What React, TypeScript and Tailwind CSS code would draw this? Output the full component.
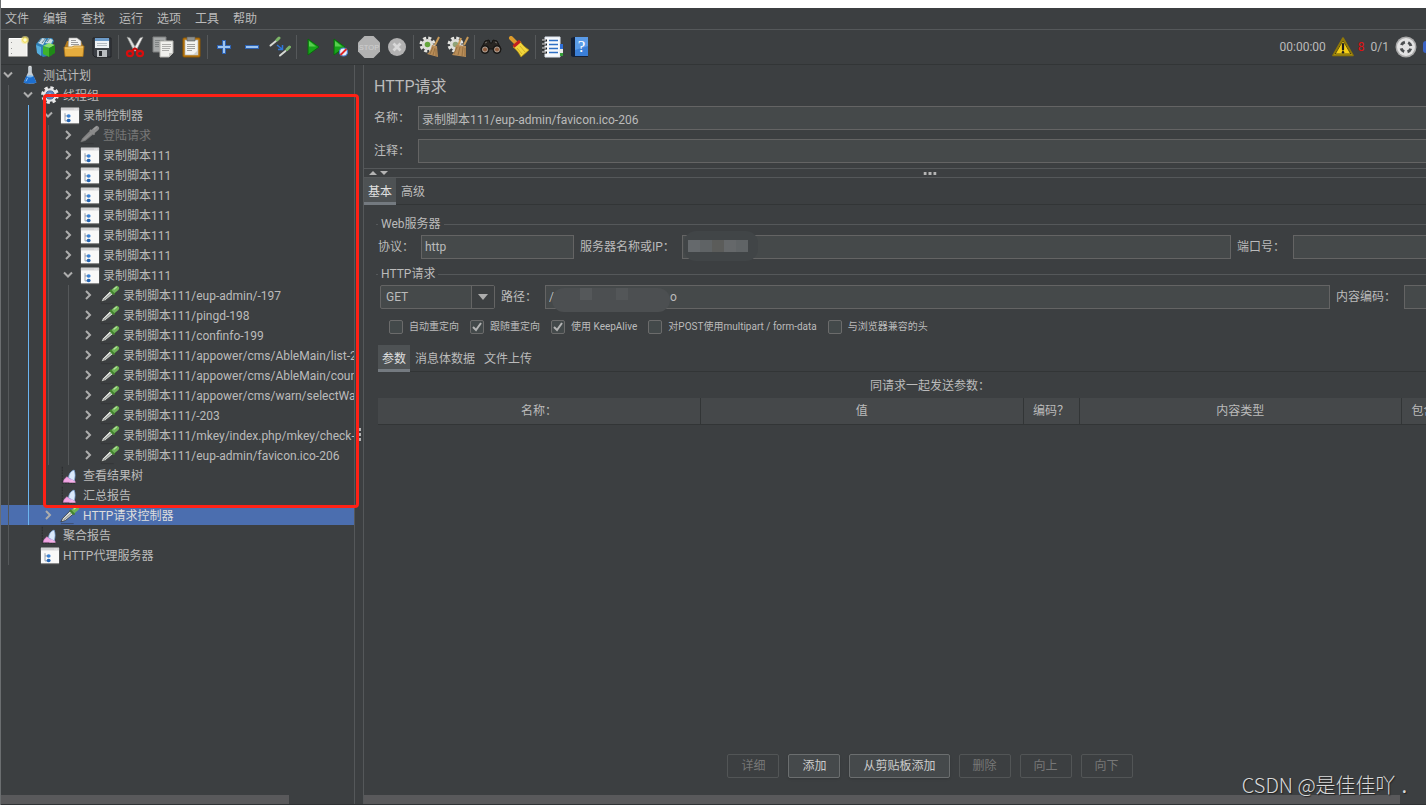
import React from "react";

const Svg: React.FC<{ size?: number; children: React.ReactNode }> = ({ size = 22, children }) => (
  <svg width={size} height={size} viewBox="0 0 22 22" fill="none" className="shrink-0" aria-hidden="true">
    {children}
  </svg>
);

/* ---------- toolbar icons ---------- */

const NewIcon = () => (
  <Svg>
    <path d="M2 2.500h18v18H2z" fill="#efefec" stroke="#fff" />
    <path d="M2 20.500h18" stroke="#9a9a96" />
    <path d="M4 6.500h1M4 12.500h1M4 17.500h1" stroke="#999" />
    <circle cx="18" cy="4" r="4" fill="#f6e98a" opacity=".6" />
    <circle cx="18" cy="4" r="2.300" fill="#fffbd0" stroke="#f0dc4c" />
  </Svg>
);

const TemplatesIcon = () => (
  <Svg>
    <path d="M1 8l5-6h11l2 3-2 4v10l-9 2-5-4z" fill="#2e7fb4" />
    <path d="M3 7l4-5 4 1-3 6zM10 7l4-5 4 2-2 4z" fill="#c9dbe4" />
    <path d="M4 6l3-4M7 7l4-5M12 6l3-4" stroke="#5c7f92" />
    <path d="M1 9l5 2v9l-4-3z" fill="#56aede" />
    <path d="M8 10l6-3 6 2-5 3z" fill="#8be06a" />
    <path d="M8 10l6 2v9l-6-3z" fill="#3fb42c" />
    <path d="M14 12l6-3v8l-6 4z" fill="#1f8a17" />
  </Svg>
);

const OpenIcon = () => (
  <Svg>
    <path d="M2 10l2-5h14l2 5v10H2z" fill="#b37a1c" />
    <path d="M6 2h8l4 3v8H5z" fill="#f3f3f1" stroke="#aaa" strokeWidth=".6" />
    <path d="M8 4.500h5M8 6.500h7M8 8.500h8" stroke="#9b9b9b" />
    <path d="M1 11h8l2-1h10l-1 10.500H2z" fill="#e6ad3e" stroke="#a8741b" strokeWidth=".8" />
    <path d="M2 12h7l2-1h9" stroke="#f8d483" />
  </Svg>
);

const SaveIcon = () => (
  <Svg>
    <path d="M2 2h18v19H4l-2-2z" fill="#3b3f45" stroke="#202226" />
    <path d="M4 2h14v10H4z" fill="#eef2f5" />
    <path d="M4 2h14v3H4z" fill="#6d9bc8" />
    <path d="M6 7.500h10M6 9.500h10" stroke="#b5bcc2" />
    <path d="M6 14h10v7H6z" fill="#b9bdc0" />
    <path d="M8 15h3v5H8z" fill="#292c30" />
  </Svg>
);

const CutIcon = () => (
  <Svg>
    <path d="M3 1l3 1 7 12-3 1z" fill="#dcdedc" stroke="#8b8d8b" strokeWidth=".6" />
    <path d="M19 1l-3 1-7 12 3 1z" fill="#f4f4f2" stroke="#8b8d8b" strokeWidth=".6" />
    <path d="M11 12l-3 3M11 12l3 3" stroke="#c80808" strokeWidth="2" />
    <ellipse cx="6" cy="17.500" rx="3" ry="2.600" stroke="#d90d0d" strokeWidth="2.200" />
    <ellipse cx="16" cy="17.500" rx="3" ry="2.600" stroke="#d90d0d" strokeWidth="2.200" />
  </Svg>
);

const CopyIcon = () => (
  <Svg>
    <path d="M1 1h13v15H1z" fill="#a5a8a8" stroke="#7c7f7f" />
    <path d="M3 4.500h9M3 6.500h4M3 8.500h4M3 10.500h4" stroke="#7f8383" />
    <path d="M8 5h13v12l-4 4H8z" fill="#f0f0ed" stroke="#b4b4b0" />
    <path d="M10 8.500h9M10 10.500h9M10 12.500h8M10 14.500h7" stroke="#adadab" />
    <path d="M17 21v-4h4z" fill="#c6c6c2" />
  </Svg>
);

const PasteIcon = () => (
  <Svg>
    <rect x="3" y="2" width="17" height="19" rx="1" fill="#c17d11" stroke="#8f5902" />
    <path d="M5 4h13v15H5z" fill="#f3f3f1" stroke="#a9a9a5" strokeWidth=".6" />
    <path d="M7 1h8v4H7z" fill="#8e918f" stroke="#5d605e" strokeWidth=".6" />
    <path d="M7 8.500h8M7 10.500h8M7 12.500h8M7 14.500h5" stroke="#a0a09e" />
    <path d="M13 19l5-5v5z" fill="#cfcfcb" />
  </Svg>
);

const PlusIcon = () => (
  <Svg>
    <path d="M11 4v14M4 11h14" stroke="#2d62b3" strokeWidth="4" />
    <path d="M11 5v12M5 11h12" stroke="#9cc4f0" strokeWidth="2" />
  </Svg>
);

const MinusIcon = () => (
  <Svg>
    <path d="M4 11h14" stroke="#2d62b3" strokeWidth="4" />
    <path d="M5 11h12" stroke="#9cc4f0" strokeWidth="2" />
  </Svg>
);

const ToggleIcon = () => (
  <Svg>
    <path d="M1.500 9.500L7 5" stroke="#d6d8d4" strokeWidth="2" strokeLinecap="round" />
    <path d="M8 4l2-2" stroke="#7cb568" strokeWidth="3" strokeLinecap="round" />
    <path d="M11 19.500l5.500-4.500" stroke="#d6d8d4" strokeWidth="2" strokeLinecap="round" />
    <path d="M18 13.500l2.500-2.500" stroke="#7cb568" strokeWidth="3" strokeLinecap="round" />
    <path d="M8 9l5 4M13.500 9v4.500H9" stroke="#2f74d8" strokeWidth="1.500" />
  </Svg>
);

const PlayIcon = () => (
  <Svg>
    <path d="M6 3l11 8-11 8z" fill="#18a51b" stroke="#0a6a0d" />
    <path d="M7 5l7 5.500H7z" fill="#58cf4f" />
  </Svg>
);

const PlayNoPauseIcon = () => (
  <Svg>
    <path d="M4 3l11 8-11 8z" fill="#18a51b" stroke="#0a6a0d" />
    <path d="M5 5l7 5.500H5z" fill="#58cf4f" />
    <circle cx="13.500" cy="16" r="4" fill="#e9eef8" stroke="#4c7fd0" strokeWidth="1.200" />
    <path d="M10.500 19l6-6" stroke="#e02424" strokeWidth="1.800" />
  </Svg>
);

const StopIcon = () => (
  <Svg>
    <path d="M6.500 0h9L22 6.500v9L15.500 22h-9L0 15.500v-9z" fill="#b2b2b2" />
    <text x="11" y="14" textAnchor="middle" fontSize="7.500" fontFamily="Liberation Sans, sans-serif" fill="#cfcfcf">
      STOP
    </text>
  </Svg>
);

const ShutdownIcon = () => (
  <Svg>
    <circle cx="11" cy="11" r="9" fill="#b2b2b2" />
    <path d="M7.500 7.500l7 7M14.500 7.500l-7 7" stroke="#d8d8d8" strokeWidth="2.800" />
  </Svg>
);

const Gear: React.FC<{ hub: string }> = ({ hub }) => (
  <>
    <circle cx="8.500" cy="8.500" r="6.500" stroke="#e4e4e0" strokeWidth="3" strokeDasharray="3 2.100" />
    <circle cx="8.500" cy="8.500" r="5.500" fill="#dededa" />
    <circle cx="8.500" cy="8.500" r="2.800" fill={hub} />
  </>
);

const ClearIcon = () => (
  <Svg>
    <Gear hub="#64a63c" />
    <path d="M20 1l-4 8" stroke="#c99a58" strokeWidth="2" />
    <path d="M13 9l5 1 1 11-11-3c3-2 4-5 5-9z" fill="#b98d58" />
    <path d="M14 11l-3 7M16 12l-2 7M17 13l0 7" stroke="#8e6a3c" strokeWidth=".8" />
  </Svg>
);

const ClearAllIcon = () => (
  <Svg>
    <Gear hub="#8fa378" />
    <path d="M14 2l-3 8M21 1l-4 8" stroke="#c99a58" strokeWidth="2" />
    <path d="M9 9l10 1 0 11-14-2c3-3 3-6 4-10z" fill="#b98d58" />
    <path d="M10 11l-3 7M13 11l-2 8M16 11l-1 9M18 12l0 8" stroke="#8e6a3c" strokeWidth=".8" />
  </Svg>
);

const SearchIcon = () => (
  <Svg>
    <path d="M5 5l4-1 1 3h2l1-3 4 1 4 8H1z" fill="#292623" stroke="#161412" />
    <path d="M5 7l2-1M15 6l2 1" stroke="#77716a" />
    <circle cx="5" cy="13.500" r="4" fill="#2a2725" stroke="#171513" />
    <circle cx="17" cy="13.500" r="4" fill="#2a2725" stroke="#171513" />
    <circle cx="5" cy="13.500" r="2.500" fill="#8b5a3c" stroke="#c0b4a8" strokeWidth=".8" />
    <circle cx="17" cy="13.500" r="2.500" fill="#8b5a3c" stroke="#c0b4a8" strokeWidth=".8" />
  </Svg>
);

const ResetSearchIcon = () => (
  <Svg>
    <path d="M3 2l5 5" stroke="#dc9b2c" strokeWidth="4" strokeLinecap="round" />
    <path d="M5 11l7-6c2 4 5 6 9 9l-8 7c-2-4-4-7-8-10z" fill="#f1d63c" stroke="#b08c12" strokeWidth=".8" />
    <path d="M5.500 10.500L12 5" stroke="#c32020" strokeWidth="3" />
    <path d="M9 12l5 6M12 10l5 6" stroke="#d3b022" />
  </Svg>
);

const FunctionIcon = () => (
  <Svg>
    <path d="M4 1h15v20H4z" fill="#f7f9fc" stroke="#dfe6f0" />
    <path d="M19 8h3v5h-3z" fill="#2f6fd6" />
    <path d="M19 13h3v4h-3z" fill="#e8e8e8" />
    <path d="M19 17h3v3h-3z" fill="#36a03a" />
    <path d="M1 4.500h5M1 8.500h5M1 12.500h5M1 16.500h5" stroke="#1c1c1c" strokeWidth="2" />
    <path d="M1 4h4M1 8h4M1 12h4M1 16h4" stroke="#eee" />
    <path d="M8 4.500h9M8 8.500h9M8 12.500h9M8 16.500h9" stroke="#2e6fc4" strokeWidth="1.500" />
  </Svg>
);

const HelpIcon = () => (
  <Svg>
    <path d="M2 2l3-1h14v20H4l-2-1z" fill="#142036" />
    <path d="M6 1h13v19H6z" fill="#3a7fd8" />
    <path d="M6 1h13v9L6 14z" fill="#5a9be8" />
    <text x="12.500" y="16" textAnchor="middle" fontSize="17" fontFamily="Liberation Serif, serif" fill="#fff">
      ?
    </text>
  </Svg>
);

const WarningIcon = () => (
  <Svg>
    <path d="M11 2L1 19.500h20z" fill="#f5cf17" stroke="#8f7708" strokeWidth="1.600" strokeLinejoin="round" />
    <path d="M11 4.500L3.200 18h15.600z" stroke="#35300b" strokeWidth=".8" />
    <path d="M11 8v5.500" stroke="#1d1d1d" strokeWidth="2.200" strokeLinecap="round" />
    <circle cx="11" cy="16.300" r="1.200" fill="#1d1d1d" />
  </Svg>
);

const ServerStateIcon = () => (
  <Svg>
    <circle cx="11" cy="11" r="10.500" fill="#a9a9a9" />
    <circle cx="11" cy="11" r="9" fill="#e2e2e2" />
    <circle cx="11" cy="11" r="5" stroke="#4b4e50" strokeWidth="3" strokeDasharray="4.400 3.450" strokeDashoffset="-1.700" />
  </Svg>
);

/* ---------- tree icons ---------- */

const PlanIcon = () => (
  <Svg size={20}>
    <path d="M9 2h4v6l5 11c0 2-14 2-14 0L9 8z" fill="#dfe8ee" opacity=".85" />
    <path d="M7 12h8l3 7c0 2-14 2-14 0z" fill="#1d6fd0" />
    <ellipse cx="11" cy="12.500" rx="3.500" ry="1.200" fill="#7db9ee" />
    <path d="M9.500 1.500h3" stroke="#fff" />
    <path d="M6.500 18l2-4" stroke="#9fd0fa" />
  </Svg>
);

const ThreadIcon = () => (
  <Svg size={20}>
    <circle cx="11" cy="11" r="8" stroke="#e8e8e8" strokeWidth="3.500" strokeDasharray="3.500 2.800" />
    <circle cx="11" cy="11" r="7.500" fill="#e4e5e7" />
    <circle cx="11" cy="11" r="4.500" fill="#5b86c4" stroke="#48658f" />
    <circle cx="11" cy="11" r="1.800" fill="#a9c4e6" />
  </Svg>
);

const ControllerIcon = () => (
  <Svg size={20}>
    <path d="M1 3h20v17H1z" fill="#f9f9f9" />
    <path d="M1 3h20v3H1z" fill="#d2d2d4" />
    <path d="M16 4.500h1M18 4.500h1" stroke="#fff" />
    <path d="M5.500 9v8.500H8M5.500 12H8" stroke="#8c98a8" />
    <ellipse cx="9.500" cy="12" rx="2.200" ry="1.900" fill="#3c82d4" />
    <ellipse cx="9.500" cy="17" rx="2.200" ry="1.900" fill="#2465b4" />
    <path d="M1 20.500h20" stroke="#9a9a9a" />
  </Svg>
);

const SamplerIcon: React.FC<{ disabled?: boolean }> = ({ disabled }) => (
  <Svg size={20}>
    <path d="M1 20.500h14" stroke="#2b2d2e" opacity=".5" />
    <path d="M1 18.500L3 14.500 11 6.500l3.500 3.500L6 17z" fill={disabled ? "#858585" : "#dcdfdb"} stroke={disabled ? "#777" : "#2b2d2c"} strokeWidth=".8" />
    <path d="M4 16.500L12.500 9" stroke={disabled ? "#929292" : "#9a9f9b"} strokeWidth="1.200" />
    <path d="M14 7.500L18.500 3.500" stroke={disabled ? "#8b8b8b" : "#6fb356"} strokeWidth="5" strokeLinecap="round" />
    <path d="M11 5.500l5 5" stroke={disabled ? "#8b8b8b" : "#42802f"} strokeWidth="2" />
    <path d="M15.500 4.500l2.500-2" stroke={disabled ? "#a0a0a0" : "#b4e09c"} strokeWidth="1.500" strokeLinecap="round" />
  </Svg>
);

const ReportIcon = () => (
  <Svg size={20}>
    <path d="M2.500 2v18H17" stroke="#26282a" strokeDasharray="2 1" />
    <path d="M3.500 19l1-3 3-3 3 1.500 2-1.500 3 3 1.500 3z" fill="#f2a6e4" stroke="#d27cc4" strokeWidth=".6" />
    <path d="M9.500 14c0-4 2.500-7.500 6-8.500 1.500 4 1.500 7.500 0 12z" fill="#dbe9fb" stroke="#7ba4d8" strokeWidth=".8" />
    <path d="M10 19.300l3-4 4 4z" fill="#f4b4e8" />
  </Svg>
);

const Chevron: React.FC<{ open?: boolean }> = ({ open }) => (
  <svg width="10" height="10" viewBox="0 0 10 10" fill="none" stroke="#adadad" strokeWidth="2" aria-hidden="true">
    <path d={open ? "M1 2.500l4 4 4-4" : "M3 1l4 4-4 4"} />
  </svg>
);

/* ---------- data ---------- */

const menus = ["文件", "编辑", "查找", "运行", "选项", "工具", "帮助"];

const toolbar: [string, React.FC][][] = [
  [["新建", NewIcon], ["模板", TemplatesIcon], ["打开", OpenIcon], ["保存", SaveIcon]],
  [["剪切", CutIcon], ["复制", CopyIcon], ["粘贴", PasteIcon]],
  [["展开", PlusIcon], ["收起", MinusIcon], ["切换", ToggleIcon]],
  [["启动", PlayIcon], ["不停顿开始", PlayNoPauseIcon], ["停止", StopIcon], ["关闭", ShutdownIcon]],
  [["清除", ClearIcon], ["清除全部", ClearAllIcon]],
  [["搜索", SearchIcon], ["重置搜索", ResetSearchIcon]],
  [["函数助手", FunctionIcon], ["帮助", HelpIcon]],
];

type Node = {
  label: string;
  depth: number;
  icon: React.ReactNode;
  state?: "open" | "closed";
  selected?: boolean;
  disabled?: boolean;
};

const requests = [
  "/eup-admin/-197",
  "/pingd-198",
  "/confinfo-199",
  "/appower/cms/AbleMain/list-200",
  "/appower/cms/AbleMain/count-201",
  "/appower/cms/warn/selectWarn-202",
  "/-203",
  "/mkey/index.php/mkey/check-204",
  "/eup-admin/favicon.ico-206",
];

const nodes: Node[] = [
  { label: "测试计划", depth: 0, icon: <PlanIcon />, state: "open" },
  { label: "线程组", depth: 1, icon: <ThreadIcon />, state: "open" },
  { label: "录制控制器", depth: 2, icon: <ControllerIcon />, state: "open" },
  { label: "登陆请求", depth: 3, icon: <SamplerIcon disabled />, state: "closed", disabled: true },
  ...Array.from({ length: 6 }, (): Node => ({
    label: "录制脚本111",
    depth: 3,
    icon: <ControllerIcon />,
    state: "closed",
  })),
  { label: "录制脚本111", depth: 3, icon: <ControllerIcon />, state: "open" },
  ...requests.map((path): Node => ({
    label: `录制脚本111${path}`,
    depth: 4,
    icon: <SamplerIcon />,
    state: "closed",
  })),
  { label: "查看结果树", depth: 2, icon: <ReportIcon /> },
  { label: "汇总报告", depth: 2, icon: <ReportIcon /> },
  { label: "HTTP请求控制器", depth: 2, icon: <SamplerIcon />, state: "closed", selected: true },
  { label: "聚合报告", depth: 1, icon: <ReportIcon /> },
  { label: "HTTP代理服务器", depth: 1, icon: <ControllerIcon /> },
];

const options = [
  { label: "自动重定向", checked: false },
  { label: "跟随重定向", checked: true },
  { label: "使用 KeepAlive", checked: true },
  { label: "对POST使用multipart / form-data", checked: false },
  { label: "与浏览器兼容的头", checked: false },
];

const actions = [
  { label: "详细", enabled: false },
  { label: "添加", enabled: true },
  { label: "从剪贴板添加", enabled: true },
  { label: "删除", enabled: false },
  { label: "向上", enabled: false },
  { label: "向下", enabled: false },
];

const mosaic = ["bg-[#65696c]", "bg-[#5f6365]", "bg-[#5b5c5a]", "bg-[#65686a]", "bg-[#606466]"];

const field = "h-6 min-w-0 border border-[#646464] bg-[#45494a] px-[3px] text-[#bbbbbb] outline-none";

/* ---------- parts ---------- */

const TreeRow: React.FC<{ node: Node }> = ({ node }) => (
  <li
    className={`flex h-5 items-center whitespace-nowrap ${
      node.selected ? "bg-[#4b6eaf] text-[#dddddd]" : node.disabled ? "text-[#777777]" : ""
    }`}
  >
    {Array.from({ length: node.depth }, (_, i) => (
      <span key={i} className="w-5 shrink-0 self-stretch pl-[7px]">
        <span className={`block h-full border-l ${i === 1 ? "border-[#6cb4f0]" : "border-[#55585a]"}`} />
      </span>
    ))}
    <span className="flex w-[19px] shrink-0 pl-[2px]">{node.state && <Chevron open={node.state === "open"} />}</span>
    {node.icon}
    <span className="pl-[3px] pt-[2px]">{node.label}</span>
  </li>
);

const Tabs: React.FC<{ items: string[] }> = ({ items }) => (
  <div role="tablist" className="flex h-[27px] gap-[1px] border-b border-[#323536]">
    {items.map((item, i) => (
      <button
        key={item}
        role="tab"
        aria-selected={i === 0}
        className={
          i === 0
            ? "h-[27px] border-b-[3px] border-[#747a80] bg-[#4e5254] px-1 pt-1 text-[#e0e0e0]"
            : "h-[27px] border-b-[3px] border-transparent px-1 pt-1"
        }
      >
        {item}
      </button>
    ))}
  </div>
);

const GroupTitle: React.FC<{ children: React.ReactNode }> = ({ children }) => (
  <div className="-ml-[2px] flex h-4 items-center gap-[3px]">
    <span className="h-px w-[2px] bg-[#55585a]" />
    <span>{children}</span>
    <span className="h-px flex-1 bg-[#55585a]" />
  </div>
);

const Toolbar = () => (
  <div className="flex h-[35px] shrink-0 items-center border-b border-[#323536] pl-[3px]">
    {toolbar.map((group, i) => (
      <React.Fragment key={i}>
        {i > 0 && <span className="mx-[2px] h-6 w-px bg-[#55585a]" />}
        {group.map(([name, Icon]) => (
          <button key={name} aria-label={name} className="flex w-7 shrink-0 justify-center">
            <Icon />
          </button>
        ))}
      </React.Fragment>
    ))}
    <div className="ml-auto flex items-center">
      <span>00:00:00</span>
      <button aria-label="日志" className="ml-[6px] mr-[4px]">
        <WarningIcon />
      </button>
      <span className="text-[#e01010]">8</span>
      <span className="mx-[6px]">0/1</span>
      <ServerStateIcon />
      <span className="ml-[6px] h-3 w-[3px] rounded-l-full bg-[#3a62c4]" />
    </div>
  </div>
);

const Tree = () => (
  <aside className="flex w-[354px] shrink-0 flex-col overflow-hidden border-r border-[#55585a]">
    <ul className="flex-1 overflow-hidden">
      {nodes.map((node, i) => (
        <TreeRow key={i} node={node} />
      ))}
    </ul>
    <div className="h-[9px] w-[288px] bg-[#59595b]" />
  </aside>
);

const RequestPanel = () => (
  <div className="flex w-[calc(100%+70px)] flex-1 flex-col">
    <h1 className="pl-[10px] pt-[10px] text-base leading-6">HTTP请求</h1>
    <div className="mt-[7px] flex items-center pl-[10px]">
      <label htmlFor="name" className="w-11">名称：</label>
      <input id="name" className={`${field} flex-1`} defaultValue="录制脚本111/eup-admin/favicon.ico-206" />
    </div>
    <div className="mt-[9px] flex items-center pl-[10px]">
      <label htmlFor="comment" className="w-11">注释：</label>
      <input id="comment" className={`${field} flex-1`} />
    </div>

    <div className="relative mt-[5px] flex h-[10px] items-center gap-1 border-y border-[#55585a] pl-1">
      <svg width="20" height="6" viewBox="0 0 20 6" fill="#b4b4b4" aria-hidden="true">
        <path d="M1 5l4-4 4 4zM12 1l4 4 4-4z" />
      </svg>
      <svg width="13" height="3" viewBox="0 0 13 3" fill="#b4b4b4" className="absolute left-1/2 -translate-x-1/2" aria-hidden="true">
        <path d="M0 0h3v3H0zM5 0h3v3H5zM10 0h3v3h-3z" />
      </svg>
    </div>

    <Tabs items={["基本", "高级"]} />

    <div className="flex flex-1 flex-col pl-[14px] pr-[14px]">
      <div className="mt-[11px]">
        <GroupTitle>Web服务器</GroupTitle>
      </div>
      <div className="mt-[3px] flex items-center">
        <label htmlFor="protocol" className="w-[43px] shrink-0">协议：</label>
        <input id="protocol" className={`${field} w-[153px]`} defaultValue="http" />
        <label htmlFor="server" className="w-[108px] shrink-0 pl-[6px]">服务器名称或IP：</label>
        <div className="relative flex flex-1">
          <input id="server" className={`${field} flex-1`} />
          <div className="absolute -top-1 left-[2px] flex h-[30px] w-[74px] items-center rounded-xl bg-[#414547] pl-1">
            {mosaic.map((shade) => (
              <span key={shade} className={`h-3 w-3 ${shade}`} />
            ))}
          </div>
        </div>
        <label htmlFor="port" className="w-[62px] shrink-0 pl-[6px]">端口号：</label>
        <input id="port" className={`${field} w-[189px]`} />
      </div>

      <div className="mt-[7px]">
        <GroupTitle>HTTP请求</GroupTitle>
      </div>
      <div className="mt-[3px] flex items-center pl-[2px]">
        <div className="relative w-[115px] shrink-0">
          <select
            aria-label="方法"
            className="block h-6 w-full appearance-none rounded-xs border border-[#646464] bg-[#45494a] px-[5px] outline-none"
          >
            <option>GET</option>
            <option>POST</option>
          </select>
          <span className="pointer-events-none absolute inset-y-px right-px flex w-[23px] items-center justify-center border-l border-[#646464] bg-[#3c3f41]">
            <svg width="10" height="6" viewBox="0 0 10 6" fill="#adadad" aria-hidden="true">
              <path d="M0 0h10L5 6z" />
            </svg>
          </span>
        </div>
        <label htmlFor="path" className="w-[50px] shrink-0 pl-[6px]">路径：</label>
        <div className="relative flex flex-1">
          <input id="path" className={`${field} flex-1`} defaultValue={`/${"\u00a0".repeat(39)}o`} />
          <div className="absolute left-[7px] top-[3px] h-6 w-[118px] rounded-full bg-[#4c4f51]">
            <span className="absolute left-7 top-0 h-3 w-3 bg-[#55585a]" />
            <span className="absolute left-16 top-0 h-3 w-3 bg-[#535658]" />
          </div>
        </div>
        <label htmlFor="encoding" className="w-[74px] shrink-0 pl-[6px]">内容编码：</label>
        <input id="encoding" className={`${field} w-[78px]`} />
      </div>

      <div className="mt-[11px] flex items-center gap-[11px] pl-[11px] text-[10px] leading-[14px]">
        {options.map((option) => (
          <label key={option.label} className="flex items-center gap-[6px] whitespace-nowrap">
            <span className="relative flex h-[14px] w-[14px]">
              <input
                type="checkbox"
                defaultChecked={option.checked}
                className="peer h-[14px] w-[14px] appearance-none rounded-xs border border-[#6b6b6b] bg-[#43494a]"
              />
              <svg
                viewBox="0 0 14 14"
                fill="none"
                stroke="#b4b4b4"
                strokeWidth="2"
                className="pointer-events-none absolute inset-0 hidden peer-checked:block"
                aria-hidden="true"
              >
                <path d="M3 7l3 3 5-7" />
              </svg>
            </span>
            {option.label}
          </label>
        ))}
      </div>

      <div className="mt-[11px]">
        <Tabs items={["参数", "消息体数据", "文件上传"]} />
      </div>
      <table className="w-full table-fixed">
        <caption className="h-[26px] pt-px leading-[26px]">同请求一起发送参数：</caption>
        <colgroup>
          <col />
          <col />
          <col className="w-14" />
          <col />
          <col className="w-20" />
        </colgroup>
        <thead>
          <tr className="h-[26px] bg-[#45484a]">
            {["名称：", "值", "编码？", "内容类型", "包含等于？"].map((head) => (
              <th key={head} className="whitespace-nowrap border-b border-r border-[#323536] p-0 font-normal">
                {head}
              </th>
            ))}
          </tr>
        </thead>
      </table>

      <div className="mt-auto flex justify-center gap-[9px] pb-[17px]">
        {actions.map((action) => (
          <button
            key={action.label}
            disabled={!action.enabled}
            className="h-6 rounded-xs border border-[#6b6e6f] bg-[#45494b] px-[13px] text-[#cccccc] shadow-sm disabled:border-[#525556] disabled:bg-transparent disabled:text-[#777777] disabled:shadow-none"
          >
            {action.label}
          </button>
        ))}
      </div>
    </div>
  </div>
);

const App: React.FC = () => (
  <div className="relative flex h-screen flex-col overflow-hidden border-l border-[#6b6e70] bg-[#3c3f41] font-[Roboto,'Noto_Sans_CJK_SC',sans-serif] text-xs text-[#bbbbbb]">
    <div className="h-2 shrink-0 bg-white" />
    <nav className="flex h-[22px] shrink-0 items-center gap-[14px] border-b border-[#55585a] pl-1">
      {menus.map((menu) => (
        <button key={menu}>{menu}</button>
      ))}
    </nav>
    <Toolbar />
    <main className="flex min-h-0 flex-1">
      <Tree />
      <div className="flex w-2 shrink-0 items-center justify-center">
        <svg width="3" height="13" viewBox="0 0 3 13" fill="#b4b4b4" aria-hidden="true">
          <path d="M0 0h3v3H0zM0 5h3v3H0zM0 10h3v3H0z" />
        </svg>
      </div>
      <section className="flex min-w-0 flex-1 flex-col overflow-hidden border-l border-[#55585a]">
        <RequestPanel />
        <div className="mr-[26px] h-[9px] shrink-0 bg-[#59595b]" />
      </section>
    </main>
    <div className="h-px shrink-0 bg-[#2f3234]" />

    {/* highlight around the recorded scripts */}
    <div className="pointer-events-none absolute left-[42px] top-[94px] h-[414px] w-[316px] rounded-sm border-[3px] border-[#ff2116]" />
    <div className="pointer-events-none absolute bottom-[6px] right-[6px] whitespace-pre font-['Noto_Sans_CJK_SC',sans-serif] text-xl font-light text-[#dadada] [text-shadow:1px_1px_1px_#222]">
      CSDN @是佳佳吖 ．
    </div>
  </div>
);

export default App;
